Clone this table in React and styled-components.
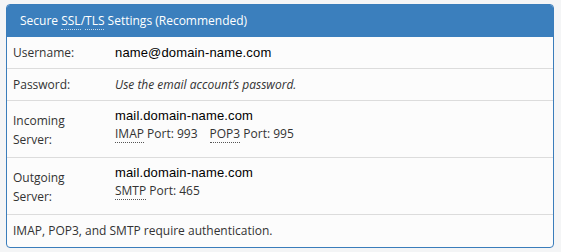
import styled, { createGlobalStyle } from "styled-components";

const Global = createGlobalStyle`
  body {
    margin: 0;
    background: #f4f5f6;
    font-family: "Open Sans", "Liberation Sans", sans-serif;
  }
`;

const Panel = styled.div`
  margin: 4px 0 0 6px;
  width: 548px;
  box-sizing: border-box;
  border: 1px solid #3a7dbb;
  border-radius: 4px;
  background: #fcfcfc;
  overflow: hidden;
`;

const Heading = styled.div`
  background: #3b7fbd;
  color: #fff;
  font-size: 12px;
  height: 32px;
  line-height: 32px;
  padding: 0 13px;
`;

const Abbr = styled.abbr`
  text-decoration: none;
  border-bottom: 1px dotted ${(p) => (p.$light ? "rgba(255,255,255,0.7)" : "#555")};
  cursor: help;
`;

const Row = styled.div`
  display: flex;
  align-items: center;
  min-height: ${(p) => p.$h}px;
  box-sizing: border-box;
  padding: 0 6px;
  border-top: ${(p) => (p.$first ? "none" : "1px solid #dcdcdc")};
`;

const Label = styled.div`
  width: 80px;
  flex: none;
  font-size: 12px;
  line-height: 19px;
  color: #333;
  margin-top: ${(p) => p.$shift || 0}px;
`;

const Value = styled.div`
  font-family: "Liberation Sans", Arial, sans-serif;
  font-size: 13px;
  letter-spacing: 0.15px;
  color: #000;
  line-height: 18px;
  padding-left: 22px;
  margin-top: ${(p) => p.$shift || 0}px;
`;

const Note = styled.div`
  font-size: 12px;
  font-style: italic;
  color: #333;
  padding-left: 22px;
`;

const Ports = styled.div`
  font-family: "Open Sans", sans-serif;
  font-size: 12px;
  letter-spacing: 0;
  color: #333;
  line-height: 18px;
  display: flex;
  gap: 12px;
`;

const Footer = styled.div`
  border-top: 1px solid #dcdcdc;
  height: 32px;
  line-height: 31px;
  padding: 0 6px;
  font-size: 12px;
  color: #333;
`;

export default function App() {
  return (
    <>
      <Global />
      <Panel>
        <Heading>
          Secure <Abbr $light title="Secure Sockets Layer">SSL</Abbr>/<Abbr $light title="Transport Layer Security">TLS</Abbr> Settings (Recommended)
        </Heading>
        <Row $first $h={31}>
          <Label>Username:</Label>
          <Value>name@domain-name.com</Value>
        </Row>
        <Row $h={32}>
          <Label>Password:</Label>
          <Note>Use the email account’s password.</Note>
        </Row>
        <Row $h={57}>
          <Label $shift={2}>Incoming Server:</Label>
          <Value $shift={-9}>
            mail.domain-name.com
            <Ports>
              <span><Abbr title="Internet Message Access Protocol">IMAP</Abbr> Port: 993</span>
              <span><Abbr title="Post Office Protocol 3">POP3</Abbr> Port: 995</span>
            </Ports>
          </Value>
        </Row>
        <Row $h={57}>
          <Label $shift={2}>Outgoing Server:</Label>
          <Value $shift={-9}>
            mail.domain-name.com
            <Ports>
              <span><Abbr title="Simple Mail Transfer Protocol">SMTP</Abbr> Port: 465</span>
            </Ports>
          </Value>
        </Row>
        <Footer>IMAP, POP3, and SMTP require authentication.</Footer>
      </Panel>
    </>
  );
}
